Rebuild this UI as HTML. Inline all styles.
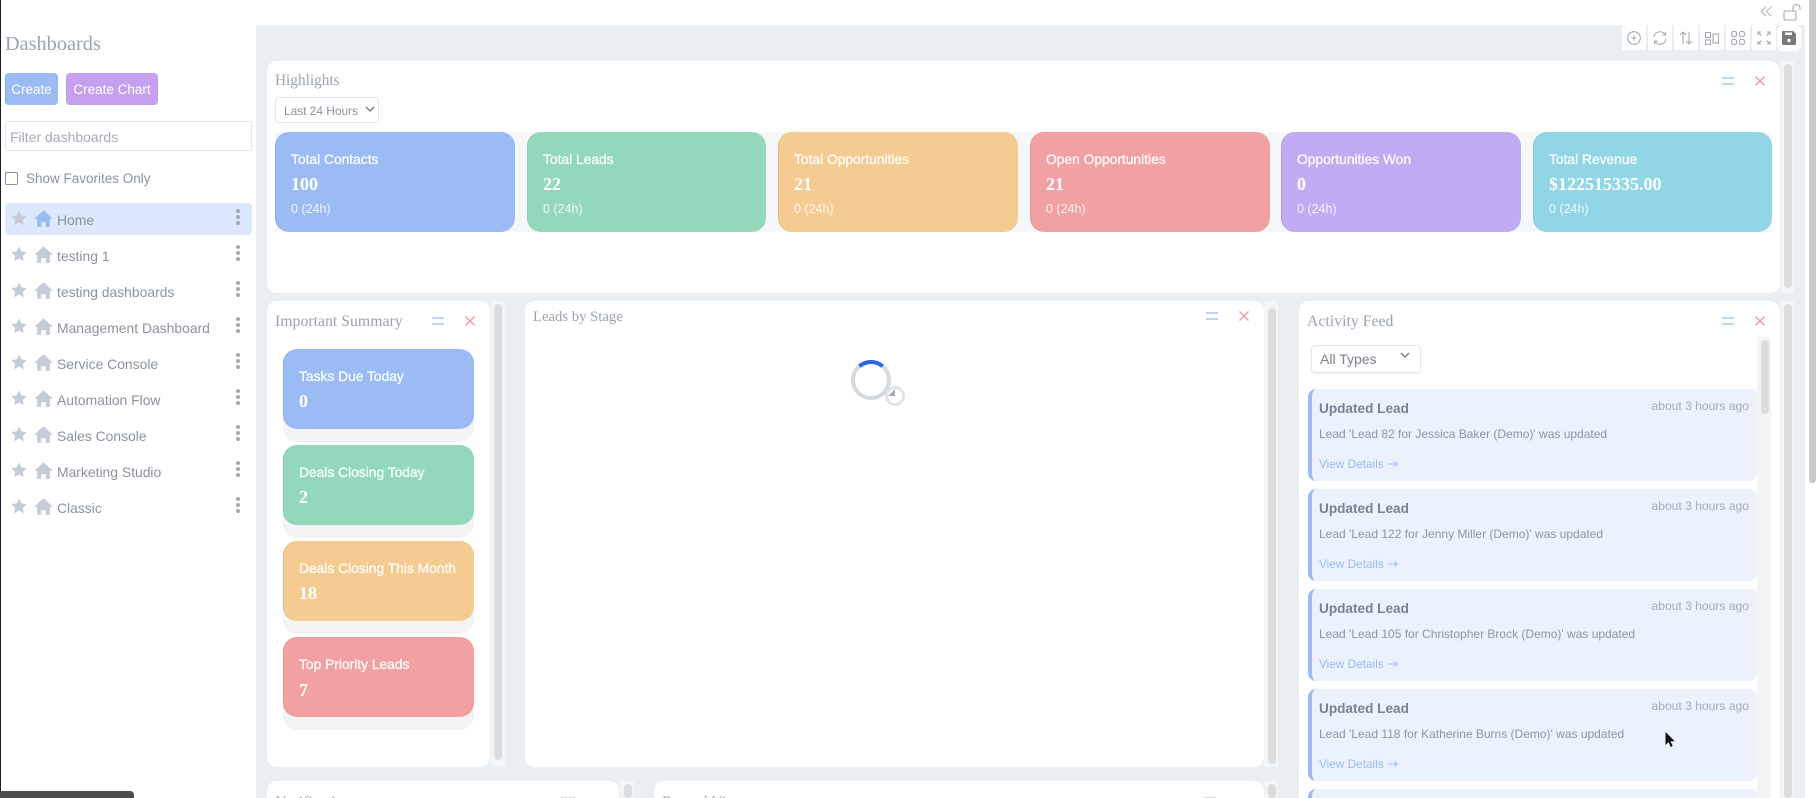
<!DOCTYPE html>
<html><head><meta charset="utf-8"><title>Dashboards</title>
<style>
html,body{margin:0;padding:0;width:1816px;height:798px;overflow:hidden;background:#fff}
body{position:relative;font-family:"Liberation Sans",sans-serif}
div,span,svg{position:absolute;box-sizing:border-box}
.t{white-space:nowrap;line-height:20px;height:20px}
.serif{font-family:"Liberation Serif",serif;color:#9ca3af;font-size:15.8px}
.p{background:#fff;border-radius:10px}
.track{background:#f3f4f6}
.thumb{background:#dcdcdc;border-radius:4px}
.c{width:240px;height:100px;top:132px;border-radius:14px;color:#fff;box-shadow:inset 1px 0 0 rgba(90,90,90,.12)}
.c .a{left:16px;top:18px;font-size:13.8px;-webkit-text-stroke:.3px #fff;opacity:.95}
.c .b{left:16px;top:42px;font-family:"Liberation Serif",serif;font-weight:700;font-size:18px}
.c .d{left:16px;top:67px;font-size:12.5px;opacity:.85}
.sh{left:283px;width:191px;height:30px;background:#f3f4f6;border-radius:0 0 14px 14px}
.s{left:283px;width:191px;height:80px;border-radius:14px;color:#fff;box-shadow:inset 1px 0 0 rgba(90,90,90,.12)}
.s .a{left:16px;top:18px;font-size:13.8px;-webkit-text-stroke:.3px #fff;opacity:.95}
.s .b{left:16px;top:41.500px;font-family:"Liberation Serif",serif;font-weight:700;font-size:18px}
.n{left:57px;font-size:13.9px;color:#8b929e}
.f{left:1308px;width:449px;height:92px;background:#ebf2fd;border-left:4px solid #9bbbf5;border-radius:8px}
.f .h{left:7px;top:9.500px;font-size:13.6px;font-weight:700;color:#7b818c}
.f .w{right:8px;top:7px;font-size:12.1px;color:#a6abb5}
.f .m{left:7px;top:35px;font-size:12px;color:#8e94a0}
.f .v{left:7px;top:65px;font-size:11.800px;color:#9bbbf5}
.f svg{left:76px;top:71px}
.icn{fill:none;stroke:#a3a8b3;stroke-width:1.1}
</style></head>
<body>
<svg width="0" height="0" style="left:0;top:0">
<defs>
<symbol id="star" viewBox="0 0 16 16"><path fill="#c5ccd8" d="M8 .4l2.35 5 5.4.7-3.95 3.75 1 5.35L8 12.55 3.2 15.2l1-5.35L.25 6.1l5.4-.7z"/></symbol>
<symbol id="home" viewBox="0 0 16 16"><path fill="#c5ccd8" d="M8 .2L16 7.6c.2.4 0 .8-.5.8H14v7c0 .4-.2.6-.6.6H10.2v-4.6H5.8V16H2.6c-.4 0-.6-.2-.6-.6v-7H.5c-.5 0-.7-.4-.5-.8z"/></symbol>
<symbol id="homeb" viewBox="0 0 16 16"><path fill="#9bbbf5" d="M8 .2L16 7.6c.2.4 0 .8-.5.8H14v7c0 .4-.2.6-.6.6H10.2v-4.6H5.8V16H2.6c-.4 0-.6-.2-.6-.6v-7H.5c-.5 0-.7-.4-.5-.8z"/></symbol>
<symbol id="dots" viewBox="0 0 6 18"><circle cx="3" cy="3" r="2" fill="#a3a8b3"/><circle cx="3" cy="9" r="2" fill="#a3a8b3"/><circle cx="3" cy="15" r="2" fill="#a3a8b3"/></symbol>
<symbol id="eq" viewBox="0 0 14 10"><path d="M1 2h12" stroke="#9bbbf5" stroke-width="1.3"/><path d="M1 8h12" stroke="#9bbbf5" stroke-width="1.3"/></symbol>
<symbol id="x" viewBox="0 0 12 12"><path d="M1.5 1.5l9 9M10.5 1.5l-9 9" stroke="#ee9a9c" stroke-width="1.3"/></symbol>
<symbol id="arr" viewBox="0 0 10 8"><path d="M0 4h9M6.500 1.500L9.300 4 6.500 6.500" fill="none" stroke="#9bbbf5" stroke-width="1"/></symbol>
</defs>
</svg>

<!-- page background -->
<div style="left:256px;top:25px;width:1549px;height:773px;background:#e9eef3"></div>
<div style="left:0;top:0;width:1px;height:798px;background:#13233b"></div>
<div style="left:1809px;top:0;width:7px;height:483px;background:#c9c9c9;border-radius:0 0 3px 3px"></div>

<!-- top right controls -->
<div style="left:1754px;top:0;width:24px;height:24px;background:#fff"></div>
<svg style="left:1760px;top:5px" width="13" height="13" viewBox="0 0 15 15"><path d="M7 2L1.5 7.5 7 13M13 2L7.5 7.5 13 13" fill="none" stroke="#b3b7bf" stroke-width="1.3"/></svg>
<svg style="left:1783px;top:3px" width="20" height="18" viewBox="0 0 20 18"><rect x="1" y="8" width="12" height="9" rx="1.5" fill="none" stroke="#a3a8b3" stroke-width="1.1"/><path d="M10 8V5a3.5 3.5 0 0 1 7 0v2" fill="none" stroke="#a3a8b3" stroke-width="1.1"/></svg>

<!-- toolbar -->
<div style="left:1622px;top:25px;width:24px;height:25px;background:#fff"></div>
<div style="left:1648px;top:25px;width:24px;height:25px;background:#fff"></div>
<div style="left:1674px;top:25px;width:24px;height:25px;background:#fff"></div>
<div style="left:1700px;top:25px;width:24px;height:25px;background:#fff"></div>
<div style="left:1726px;top:25px;width:24px;height:25px;background:#fff"></div>
<div style="left:1752px;top:25px;width:24px;height:25px;background:#fff"></div>
<div style="left:1777px;top:25px;width:24px;height:26px;background:#fff;border-radius:6px"></div>
<svg class="icn" style="left:1627px;top:31px" width="14" height="14" viewBox="0 0 14 14"><circle cx="7" cy="7" r="6.3"/><path d="M4.5 7h5M7 4.5v5"/></svg>
<svg class="icn" style="left:1653px;top:31px" width="14" height="14" viewBox="0 0 14 14"><path d="M1 6a6 6 0 0 1 11-2.5M13 8A6 6 0 0 1 2 10.5"/><path d="M12.5 .8v3h-3M1.5 13.2v-3h3"/></svg>
<svg class="icn" style="left:1679px;top:31px" width="14" height="14" viewBox="0 0 14 14"><path d="M4 13V1M1 4l3-3 3 3M10 1v12M7 10l3 3 3-3"/></svg>
<svg class="icn" style="left:1705px;top:32px" width="14" height="13" viewBox="0 0 14 13"><rect x=".5" y=".5" width="5" height="5"/><rect x=".5" y="8" width="5" height="4.5"/><rect x="8" y="2" width="5.5" height="9"/></svg>
<svg class="icn" style="left:1731px;top:31px" width="14" height="14" viewBox="0 0 14 14"><rect x=".6" y=".6" width="5" height="5" rx="1.6"/><rect x="8.4" y=".6" width="5" height="5" rx="1.6"/><rect x=".6" y="8.4" width="5" height="5" rx="1.6"/><rect x="8.4" y="8.4" width="5" height="5" rx="1.6"/></svg>
<svg class="icn" style="left:1757px;top:31px" width="14" height="14" viewBox="0 0 14 14"><path d="M1 4V1h3M1 1l3.500 3.500M13 4V1h-3M13 1L9.500 4.500M1 10v3h3M1 13l3.500-3.500M13 10v3h-3M13 13l-3.500-3.500"/></svg>
<svg style="left:1782px;top:31px" width="14" height="14" viewBox="0 0 14 14"><path fill="#77797d" d="M1.200 0H11l3 3v9.800c0 .7-.5 1.200-1.200 1.200H1.200C.5 14 0 13.500 0 12.800V1.200C0 .5.500 0 1.200 0z"/><rect x="3" y="1.500" width="7" height="2.500" fill="#fff"/><circle cx="7" cy="9.500" r="1.800" fill="#fff"/></svg>

<!-- sidebar -->
<div class="t" style="left:5px;top:32px;height:24px;line-height:24px;font-family:'Liberation Serif',serif;font-size:20.300px;color:#9ca3af">Dashboards</div>
<div class="t" style="left:5px;top:73px;width:53px;height:32px;line-height:34px;background:#9bbbf5;border-radius:4px;color:#fff;font-size:13.500px;text-align:center;box-shadow:inset 1px 0 0 rgba(90,90,90,.2)">Create</div>
<div class="t" style="left:66px;top:73px;width:92px;height:32px;line-height:34px;background:#c4a0ef;border-radius:4px;color:#fff;font-size:13.500px;text-align:center">Create Chart</div>
<div style="left:5px;top:121px;width:247px;height:30px;border:1px solid #e5e7eb;border-radius:2px"></div>
<div class="t" style="left:10px;top:127px;font-size:14px;color:#a6abb5">Filter dashboards</div>
<div style="left:5px;top:172px;width:13px;height:13px;border:1px solid #8b8f96;border-radius:2px"></div>
<div class="t" style="left:26px;top:169px;font-size:13.500px;color:#8b929e">Show Favorites Only</div>
<div style="left:5px;top:203px;width:247px;height:32px;background:#dbe8fd;border-radius:4px"></div>

<svg style="left:11px;top:210px" width="16" height="16"><use href="#star"/></svg><svg style="left:35px;top:210px" width="17" height="17"><use href="#homeb"/></svg><div class="t n" style="top:210px">Home</div><svg style="left:235px;top:208px" width="6" height="18"><use href="#dots"/></svg>
<svg style="left:11px;top:246px" width="16" height="16"><use href="#star"/></svg><svg style="left:35px;top:246px" width="17" height="17"><use href="#home"/></svg><div class="t n" style="top:246px">testing 1</div><svg style="left:235px;top:244px" width="6" height="18"><use href="#dots"/></svg>
<svg style="left:11px;top:282px" width="16" height="16"><use href="#star"/></svg><svg style="left:35px;top:282px" width="17" height="17"><use href="#home"/></svg><div class="t n" style="top:282px">testing dashboards</div><svg style="left:235px;top:280px" width="6" height="18"><use href="#dots"/></svg>
<svg style="left:11px;top:318px" width="16" height="16"><use href="#star"/></svg><svg style="left:35px;top:318px" width="17" height="17"><use href="#home"/></svg><div class="t n" style="top:318px">Management Dashboard</div><svg style="left:235px;top:316px" width="6" height="18"><use href="#dots"/></svg>
<svg style="left:11px;top:354px" width="16" height="16"><use href="#star"/></svg><svg style="left:35px;top:354px" width="17" height="17"><use href="#home"/></svg><div class="t n" style="top:354px">Service Console</div><svg style="left:235px;top:352px" width="6" height="18"><use href="#dots"/></svg>
<svg style="left:11px;top:390px" width="16" height="16"><use href="#star"/></svg><svg style="left:35px;top:390px" width="17" height="17"><use href="#home"/></svg><div class="t n" style="top:390px">Automation Flow</div><svg style="left:235px;top:388px" width="6" height="18"><use href="#dots"/></svg>
<svg style="left:11px;top:426px" width="16" height="16"><use href="#star"/></svg><svg style="left:35px;top:426px" width="17" height="17"><use href="#home"/></svg><div class="t n" style="top:426px">Sales Console</div><svg style="left:235px;top:424px" width="6" height="18"><use href="#dots"/></svg>
<svg style="left:11px;top:462px" width="16" height="16"><use href="#star"/></svg><svg style="left:35px;top:462px" width="17" height="17"><use href="#home"/></svg><div class="t n" style="top:462px">Marketing Studio</div><svg style="left:235px;top:460px" width="6" height="18"><use href="#dots"/></svg>
<svg style="left:11px;top:498px" width="16" height="16"><use href="#star"/></svg><svg style="left:35px;top:498px" width="17" height="17"><use href="#home"/></svg><div class="t n" style="top:498px">Classic</div><svg style="left:235px;top:496px" width="6" height="18"><use href="#dots"/></svg>

<div style="left:0;top:791px;width:134px;height:7px;background:#4d4d4d;border-radius:0 4px 0 0"></div>

<!-- Highlights -->
<div class="p" style="left:267px;top:61px;width:1513px;height:232px"></div>
<div class="track" style="left:1781px;top:61px;width:13px;height:232px"></div>
<div class="thumb" style="left:1784px;top:64px;width:8px;height:224px"></div>
<div class="t serif" style="left:275px;top:71px;font-size:15.300px">Highlights</div>
<svg style="left:1721px;top:76px" width="14" height="10"><use href="#eq"/></svg>
<svg style="left:1754px;top:75px" width="12" height="12"><use href="#x"/></svg>
<div style="left:275px;top:97px;width:104px;height:26px;border:1px solid #e5e7eb;border-radius:4px"></div>
<div class="t" style="left:284px;top:101px;font-size:11.900px;color:#8b929e">Last 24 Hours</div>
<svg style="left:365px;top:106px" width="10" height="7" viewBox="0 0 10 7"><path d="M1 1l4 4 4-4" fill="none" stroke="#7b818c" stroke-width="1.500"/></svg>
<div style="left:275px;top:132px;width:1497px;height:100px;background:#f6f7f8"></div>

<div class="c" style="left:275px;background:#9bbbf5"><div class="t a">Total Contacts</div><div class="t b">100</div><div class="t d">0 (24h)</div></div>
<div class="c" style="left:527px;width:239px;background:#93d8bb"><div class="t a">Total Leads</div><div class="t b">22</div><div class="t d">0 (24h)</div></div>
<div class="c" style="left:778px;background:#f5cb92"><div class="t a">Total Opportunities</div><div class="t b">21</div><div class="t d">0 (24h)</div></div>
<div class="c" style="left:1030px;background:#f2a1a3"><div class="t a">Open Opportunities</div><div class="t b">21</div><div class="t d">0 (24h)</div></div>
<div class="c" style="left:1281px;background:#c1abf2"><div class="t a">Opportunities Won</div><div class="t b">0</div><div class="t d">0 (24h)</div></div>
<div class="c" style="left:1533px;width:239px;background:#90d6e6"><div class="t a">Total Revenue</div><div class="t b">$122515335.00</div><div class="t d">0 (24h)</div></div>

<!-- Important Summary -->
<div class="p" style="left:267px;top:301px;width:223px;height:466px"></div>
<div class="track" style="left:491px;top:301px;width:14px;height:466px"></div>
<div class="thumb" style="left:494px;top:304px;width:8px;height:456px"></div>
<div class="t serif" style="left:275px;top:312px">Important Summary</div>
<svg style="left:431px;top:316px" width="14" height="10"><use href="#eq"/></svg>
<svg style="left:464px;top:315px" width="12" height="12"><use href="#x"/></svg>

<div class="sh" style="top:412px"></div><div class="s" style="top:349px;background:#9bbbf5"><div class="t a">Tasks Due Today</div><div class="t b">0</div></div>
<div class="sh" style="top:508px"></div><div class="s" style="top:445px;background:#93d8bb"><div class="t a">Deals Closing Today</div><div class="t b">2</div></div>
<div class="sh" style="top:604px"></div><div class="s" style="top:541px;background:#f5cb92"><div class="t a">Deals Closing This Month</div><div class="t b">18</div></div>
<div class="sh" style="top:700px"></div><div class="s" style="top:637px;background:#f2a1a3"><div class="t a">Top Priority Leads</div><div class="t b" style="top:43px">7</div></div>

<!-- Leads by Stage -->
<div class="p" style="left:525px;top:301px;width:739px;height:466px"></div>
<div class="track" style="left:1264px;top:301px;width:14px;height:466px"></div>
<div class="thumb" style="left:1268px;top:308px;width:8px;height:456px"></div>
<div class="t serif" style="left:533px;top:307px;font-size:14.700px">Leads by Stage</div>
<svg style="left:1205px;top:311px" width="14" height="10"><use href="#eq"/></svg>
<svg style="left:1238px;top:310px" width="12" height="12"><use href="#x"/></svg>
<svg style="left:845px;top:356px" width="70" height="60" viewBox="845 355 70 60">
<circle cx="871" cy="379" r="18" fill="none" stroke="#d5d9e0" stroke-width="4"/>
<path d="M859.400 365.200A18 18 0 0 1 882.600 365.200" fill="none" stroke="#2c68e0" stroke-width="4"/>
<circle cx="895" cy="395" r="8.500" fill="none" stroke="#dfe3ea" stroke-width="3"/>
<path d="M888 395h7v-7z" fill="#a8aaae"/>
</svg>

<!-- Activity Feed -->
<div class="p" style="left:1299px;top:301px;width:481px;height:497px;border-radius:10px 10px 0 0"></div>
<div class="track" style="left:1781px;top:301px;width:13px;height:497px"></div>
<div class="thumb" style="left:1784px;top:304px;width:8px;height:494px"></div>
<div class="t serif" style="left:1307px;top:312px">Activity Feed</div>
<svg style="left:1721px;top:316px" width="14" height="10"><use href="#eq"/></svg>
<svg style="left:1754px;top:315px" width="12" height="12"><use href="#x"/></svg>
<div style="left:1311px;top:345px;width:110px;height:28px;border:1px solid #e5e7eb;border-radius:4px;box-shadow:0 1px 2px rgba(0,0,0,.06)"></div>
<div class="t" style="left:1320px;top:349px;font-size:14px;color:#7b818c">All Types</div>
<svg style="left:1400px;top:352px" width="10" height="7" viewBox="0 0 10 7"><path d="M1 1l4 4 4-4" fill="none" stroke="#7b818c" stroke-width="1.500"/></svg>
<div class="track" style="left:1757px;top:337px;width:14px;height:461px"></div>
<div class="thumb" style="left:1761px;top:340px;width:8px;height:74px"></div>

<div class="f" style="top:389px"><div class="t h">Updated Lead</div><div class="t w">about 3 hours ago</div><div class="t m">Lead 'Lead 82 for Jessica Baker (Demo)' was updated</div><div class="t v">View Details</div><svg width="10" height="8"><use href="#arr"/></svg></div>
<div class="f" style="top:489px"><div class="t h">Updated Lead</div><div class="t w">about 3 hours ago</div><div class="t m">Lead 'Lead 122 for Jenny Miller (Demo)' was updated</div><div class="t v">View Details</div><svg width="10" height="8"><use href="#arr"/></svg></div>
<div class="f" style="top:589px"><div class="t h">Updated Lead</div><div class="t w">about 3 hours ago</div><div class="t m">Lead 'Lead 105 for Christopher Brock (Demo)' was updated</div><div class="t v">View Details</div><svg width="10" height="8"><use href="#arr"/></svg></div>
<div class="f" style="top:689px"><div class="t h">Updated Lead</div><div class="t w">about 3 hours ago</div><div class="t m">Lead 'Lead 118 for Katherine Burns (Demo)' was updated</div><div class="t v">View Details</div><svg width="10" height="8"><use href="#arr"/></svg></div>
<div class="f" style="top:789px;height:9px;border-radius:8px 8px 0 0"></div>

<svg style="left:1664px;top:731px" width="12" height="18" viewBox="0 0 12 18"><path d="M1.500 1v13l3-3 2.200 5 2-1-2.200-4.800h4.300z" fill="#111"/></svg>

<!-- bottom row -->
<div class="p" style="left:267px;top:781px;width:352px;height:17px;border-radius:10px 10px 0 0;overflow:hidden"><div class="t serif" style="left:8px;top:12px">Notifications</div></div>
<div class="track" style="left:620px;top:781px;width:14px;height:17px"></div>
<div class="thumb" style="left:624px;top:784px;width:8px;height:14px"></div>
<div class="p" style="left:654px;top:781px;width:610px;height:17px;border-radius:10px 10px 0 0;overflow:hidden"><div class="t serif" style="left:8px;top:12px">Record Views</div></div>
<div class="track" style="left:1264px;top:781px;width:14px;height:17px"></div>
<div class="thumb" style="left:1268px;top:784px;width:8px;height:14px"></div>
<div style="left:561px;top:797px;width:14px;height:1px;background:#c9d8f5"></div>
<div style="left:1204px;top:797px;width:12px;height:1px;background:#c9d8f5"></div>
</body></html>
